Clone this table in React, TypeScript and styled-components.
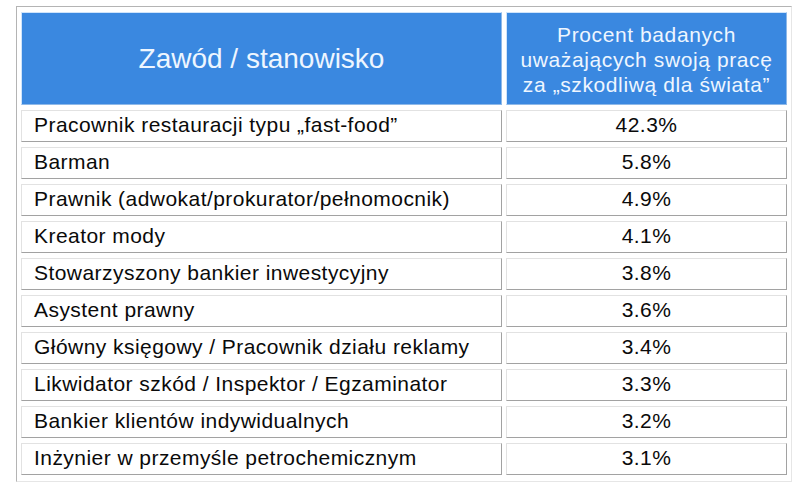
import React from "react";
import styled, { createGlobalStyle } from "styled-components";

const Global = createGlobalStyle`
  html, body { margin: 0; padding: 0; background: #ffffff; }
  body { font-family: "Liberation Sans", Arial, sans-serif; }
`;

const Page = styled.div`
  padding: 6px 0 0 16px;
`;

const Table = styled.div`
  box-sizing: border-box;
  width: 776px;
  display: grid;
  grid-template-columns: 481px 281px;
  grid-template-rows: 93px repeat(10, 32px);
  column-gap: 4px;
  row-gap: 5px;
  padding: 5px 4px 6px 4px;
  border-top: 1px solid #b4b4b4;
  border-left: 1px solid #b4b4b4;
  border-right: 1px solid #e6e6e6;
  border-bottom: 1px solid #e6e6e6;
`;

const HeadCell = styled.div<{ $small?: boolean }>`
  box-sizing: border-box;
  background: #3a88e0;
  color: #eef6ff;
  border-top: 1px solid #cfe4fb;
  border-left: 1px solid #cfe4fb;
  border-right: 1px solid #8fb9e8;
  border-bottom: 1px solid #8fb9e8;
  display: flex;
  align-items: center;
  justify-content: center;
  text-align: center;
  font-size: ${(p) => (p.$small ? "21px" : "28px")};
  letter-spacing: ${(p) => (p.$small ? "0.6px" : "0")};
  line-height: ${(p) => (p.$small ? "25px" : "32px")};
  padding-top: ${(p) => (p.$small ? "1px" : "0")};
`;

const Cell = styled.div<{ $center?: boolean }>`
  box-sizing: border-box;
  border-top: 1px solid #e2e2e2;
  border-left: 1px solid #e2e2e2;
  border-right: 1px solid #a2a2a2;
  border-bottom: 1px solid #a2a2a2;
  color: #0a0a0a;
  font-size: 21px;
  letter-spacing: 0.45px;
  line-height: 30px;
  white-space: nowrap;
  display: flex;
  align-items: center;
  justify-content: ${(p) => (p.$center ? "center" : "flex-start")};
  padding-left: ${(p) => (p.$center ? "0" : "12px")};
  padding-bottom: 3px;
`;

const rows: [string, string][] = [
  ["Pracownik restauracji typu „fast-food”", "42.3%"],
  ["Barman", "5.8%"],
  ["Prawnik (adwokat/prokurator/pełnomocnik)", "4.9%"],
  ["Kreator mody", "4.1%"],
  ["Stowarzyszony bankier inwestycyjny", "3.8%"],
  ["Asystent prawny", "3.6%"],
  ["Główny księgowy / Pracownik działu reklamy", "3.4%"],
  ["Likwidator szkód / Inspektor / Egzaminator", "3.3%"],
  ["Bankier klientów indywidualnych", "3.2%"],
  ["Inżynier w przemyśle petrochemicznym", "3.1%"],
];

export default function App() {
  return (
    <Page>
      <Global />
      <Table>
        <HeadCell>Zawód / stanowisko</HeadCell>
        <HeadCell $small>
          Procent badanych
          <br />
          uważających swoją pracę
          <br />
          za „szkodliwą dla świata”
        </HeadCell>
        {rows.map(([name, pct]) => (
          <React.Fragment key={name}>
            <Cell>{name}</Cell>
            <Cell $center>{pct}</Cell>
          </React.Fragment>
        ))}
      </Table>
    </Page>
  );
}
